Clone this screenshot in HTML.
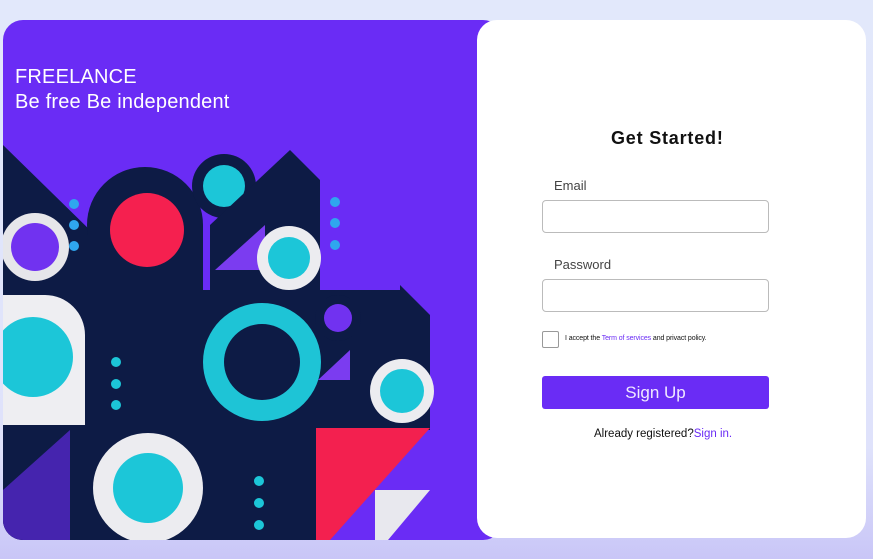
<!DOCTYPE html>
<html><head><meta charset="utf-8"><style>
*{margin:0;padding:0;box-sizing:border-box}
body{width:873px;height:559px;overflow:hidden;background:linear-gradient(180deg,#e2e8fb 0%,#dfe2fb 80%,#c9c6f7 100%);font-family:"Liberation Sans",sans-serif;position:relative}
.left{position:absolute;left:3px;top:20px;width:500px;height:520px;background:#6a2cf5;border-radius:20px;overflow:hidden}
.left h1{position:absolute;left:12px;top:45px;color:#fff;font-weight:normal;font-size:20px;line-height:25px;letter-spacing:0.2px}
.card{position:absolute;left:477px;top:20px;width:389px;height:518px;background:#fff;border-radius:20px}
.t{position:absolute;color:#111}
.inp{position:absolute;left:65px;width:227px;height:33px;border:1.5px solid #bbb;border-radius:4px}
</style></head><body>
<div class="left">
<svg width="500" height="520" style="position:absolute;left:0;top:0" viewBox="3 20 500 520">
<g>
<polygon points="3,145 95,235 95,540 3,540" fill="#0d1b45"/>
<rect x="70" y="290" width="250" height="250" fill="#0d1b45"/>
<circle cx="145" cy="225" r="58" fill="#0d1b45"/>
<rect x="88" y="225" width="115" height="70" fill="#0d1b45"/>
<circle cx="147" cy="230" r="37" fill="#f5204f"/>
<circle cx="224" cy="186" r="32" fill="#0d1b45"/>
<circle cx="224" cy="186" r="21" fill="#1cc6d8"/>
<polygon points="210,225 290,150 320,180 320,300 210,300" fill="#0d1b45"/>
<polygon points="215,270 265,225 265,270" fill="#7b3cf0"/>
<circle cx="35" cy="247" r="34" fill="#e6e6ea"/>
<circle cx="35" cy="247" r="24" fill="#7132f0"/>
<circle cx="289" cy="258" r="32" fill="#ececf0"/>
<circle cx="289" cy="258" r="21" fill="#1cc6d8"/>
<path d="M0,295 h45 a40,40 0 0 1 40,40 v90 h-85z" fill="#eeeef2"/>
<circle cx="33" cy="357" r="40" fill="#1cc6d8"/>
<rect x="315" y="290" width="85" height="140" fill="#0d1b45"/>
<polygon points="400,285 430,315 430,430 400,430" fill="#0d1b45"/>
<circle cx="338" cy="318" r="23" fill="#0d1b45"/>
<circle cx="338" cy="318" r="14" fill="#7132f0"/>
<circle cx="262" cy="362" r="59" fill="#1ec4d6"/>
<circle cx="262" cy="362" r="38" fill="#0d1b45"/>
<polygon points="318,380 350,350 350,380" fill="#7b3cf0"/>
<circle cx="402" cy="391" r="32" fill="#ececf0"/>
<circle cx="402" cy="391" r="22" fill="#1cc6d8"/>
<polygon points="316,428 430,428 330,540 316,540" fill="#f3204f"/>
<polygon points="375,490 430,490 388,540 375,540" fill="#e8e8ee"/>
<polygon points="3,430 70,430 70,540 3,540" fill="#0d1b45"/>
<polygon points="3,490 70,430 70,540 3,540" fill="#6a2cf5" opacity="0.6"/>
<circle cx="148" cy="488" r="55" fill="#ececf0"/>
<circle cx="148" cy="488" r="35" fill="#1cc6d8"/>
<g fill="#2fa6ee"><circle cx="74" cy="204" r="5"/><circle cx="74" cy="225" r="5"/><circle cx="74" cy="246" r="5"/>
<circle cx="335" cy="202" r="5"/><circle cx="335" cy="223" r="5"/><circle cx="335" cy="245" r="5"/></g>
<g fill="#1cc6d8"><circle cx="116" cy="362" r="5"/><circle cx="116" cy="384" r="5"/><circle cx="116" cy="405" r="5"/>
<circle cx="259" cy="481" r="5"/><circle cx="259" cy="503" r="5"/><circle cx="259" cy="525" r="5"/></g>
</g></svg>
<h1>FREELANCE<br>Be free Be independent</h1>
</div>
<div class="card">
<div class="t" style="left:134px;top:108px;font-size:18px;font-weight:bold;letter-spacing:0.8px">Get Started!</div>
<div class="t" style="left:77px;top:158px;font-size:13px;color:#444">Email</div>
<div class="inp" style="top:180px"></div>
<div class="t" style="left:77px;top:237px;font-size:13px;color:#444">Password</div>
<div class="inp" style="top:259px"></div>
<div style="position:absolute;left:65px;top:311px;width:17px;height:17px;border:1.5px solid #999;border-radius:2px"></div>
<div class="t" style="left:88px;top:315px;font-size:7px;letter-spacing:-0.1px">I accept the <span style="color:#6a2cf5">Term of services</span> and privact policy.</div>
<div style="position:absolute;left:65px;top:356px;width:227px;height:33px;background:#6a2cf5;border-radius:3px;color:#f0e8ff;font-size:17px;text-align:center;line-height:33px">Sign Up</div>
<div class="t" style="left:117px;top:408px;font-size:11.5px">Already registered?<span style="color:#6a2cf5">Sign in.</span></div>
</div>
</body></html>
